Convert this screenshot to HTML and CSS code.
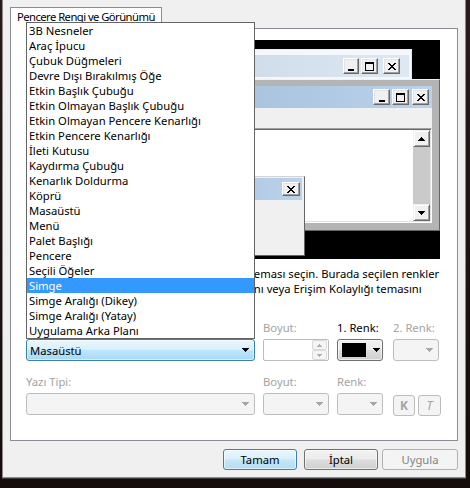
FILE: index.html
```html
<!DOCTYPE html>
<html lang="tr">
<head>
<meta charset="utf-8">
<title>Pencere Rengi ve Görünümü</title>
<link rel="stylesheet" href="styles.css">
</head>
<body>
<div class="frame">
<div class="dialog">
  <div class="tabs"><div class="tab">Pencere Rengi ve Görünümü</div></div>
  <div class="panel">
    <div class="preview">
      <div class="win inactive">
        <div class="caption">
          <span class="cap-fill"></span>
          <span class="cbtn b-min"><svg width="8" height="9" viewBox="0 0 8 9" shape-rendering="crispEdges"><rect x="1" y="7" width="6" height="2"/></svg></span>
          <span class="cbtn b-max"><svg width="9" height="9" viewBox="0 0 9 9" shape-rendering="crispEdges"><path fill-rule="evenodd" d="M0 0h9v9H0zM1 2h7v6H1z"/></svg></span>
          <span class="cbtn b-close"><svg width="8" height="7" viewBox="0 0 8 7" shape-rendering="crispEdges"><path d="M0 0h2v1H0zM6 0h2v1H6zM1 1h2v1H1zM5 1h2v1H5zM2 2h4v1H2zM3 3h2v1H3zM2 4h4v1H2zM1 5h2v1H1zM5 5h2v1H5zM0 6h2v1H0zM6 6h2v1H6z"/></svg></span>
        </div>
      </div>
      <div class="win active">
        <div class="caption">
          <span class="cap-fill"></span>
          <span class="cbtn b-min"><svg width="8" height="9" viewBox="0 0 8 9" shape-rendering="crispEdges"><rect x="1" y="7" width="6" height="2"/></svg></span>
          <span class="cbtn b-max"><svg width="9" height="9" viewBox="0 0 9 9" shape-rendering="crispEdges"><path fill-rule="evenodd" d="M0 0h9v9H0zM1 2h7v6H1z"/></svg></span>
          <span class="cbtn b-close"><svg width="8" height="7" viewBox="0 0 8 7" shape-rendering="crispEdges"><path d="M0 0h2v1H0zM6 0h2v1H6zM1 1h2v1H1zM5 1h2v1H5zM2 2h4v1H2zM3 3h2v1H3zM2 4h4v1H2zM1 5h2v1H1zM5 5h2v1H5zM0 6h2v1H0zM6 6h2v1H6z"/></svg></span>
        </div>
        <div class="menubar"></div>
        <div class="client">
          <div class="client-area"></div>
          <div class="vscroll">
            <span class="sbtn"><svg width="7" height="4" viewBox="0 0 7 4" shape-rendering="crispEdges"><path d="M3 0h1v1H3zM2 1h3v1H2zM1 2h5v1H1zM0 3h7v1H0z"/></svg></span>
            <span class="strack"></span>
            <span class="sbtn"><svg width="7" height="4" viewBox="0 0 7 4" shape-rendering="crispEdges"><path d="M0 0h7v1H0zM1 1h5v1H1zM2 2h3v1H2zM3 3h1v1H3z"/></svg></span>
          </div>
        </div>
      </div>
      <div class="win msgbox">
        <div class="caption">
          <span class="cap-fill"></span>
          <span class="cbtn b-close"><svg width="8" height="7" viewBox="0 0 8 7" shape-rendering="crispEdges"><path d="M0 0h2v1H0zM6 0h2v1H6zM1 1h2v1H1zM5 1h2v1H5zM2 2h4v1H2zM3 3h2v1H3zM2 4h4v1H2zM1 5h2v1H1zM5 5h2v1H5zM0 6h2v1H0zM6 6h2v1H6z"/></svg></span>
        </div>
        <div class="msgbody"></div>
      </div>
    </div>

    <p class="desc">Bir Windows 7 Temel veya Windows Klasik teması seçin. Burada seçilen renkler<br>ve boyutlar, yalnızca Windows Klasik temasını veya Erişim Kolaylığı temasını</p>

    <div class="row row1">
      <div class="field w-main">
        <span class="lbl">Öğe:</span>
        <div class="anchor">
          <div class="combo hot"><span class="cval">Masaüstü</span><span class="carr"><svg width="7" height="4" viewBox="0 0 7 4" shape-rendering="crispEdges"><path d="M0 0h7v1H0zM1 1h5v1H1zM2 2h3v1H2zM3 3h1v1H3z"/></svg></span></div>
          <ul class="droplist">
            <li>3B Nesneler</li>
            <li>Araç İpucu</li>
            <li>Çubuk Düğmeleri</li>
            <li>Devre Dışı Bırakılmış Öğe</li>
            <li>Etkin Başlık Çubuğu</li>
            <li>Etkin Olmayan Başlık Çubuğu</li>
            <li>Etkin Olmayan Pencere Kenarlığı</li>
            <li>Etkin Pencere Kenarlığı</li>
            <li>İleti Kutusu</li>
            <li>Kaydırma Çubuğu</li>
            <li>Kenarlık Doldurma</li>
            <li>Köprü</li>
            <li>Masaüstü</li>
            <li>Menü</li>
            <li>Palet Başlığı</li>
            <li>Pencere</li>
            <li>Seçili Öğeler</li>
            <li class="sel">Simge</li>
            <li>Simge Aralığı (Dikey)</li>
            <li>Simge Aralığı (Yatay)</li>
            <li>Uygulama Arka Planı</li>
          </ul>
        </div>
      </div>
      <div class="field w-size">
        <span class="lbl dis">Boyut:</span>
        <div class="spinbox">
          <span class="spin">
            <span class="sp"><svg width="5" height="3" viewBox="0 0 5 3" shape-rendering="crispEdges"><path d="M2 0h1v1H2zM1 1h3v1H1zM0 2h5v1H0z"/></svg></span>
            <span class="sp"><svg width="5" height="3" viewBox="0 0 5 3" shape-rendering="crispEdges"><path d="M0 0h5v1H0zM1 1h3v1H1zM2 2h1v1H2z"/></svg></span>
          </span>
        </div>
      </div>
      <div class="field w-color">
        <span class="lbl">1. Renk:</span>
        <div class="colorbtn"><span class="swatch"></span><svg class="carr-svg" width="7" height="4" viewBox="0 0 7 4" shape-rendering="crispEdges"><path d="M0 0h7v1H0zM1 1h5v1H1zM2 2h3v1H2zM3 3h1v1H3z"/></svg></div>
      </div>
      <div class="field w-last">
        <span class="lbl dis">2. Renk:</span>
        <div class="combo disabled narrow"><span class="cval"></span><span class="carr"><svg width="7" height="4" viewBox="0 0 7 4" shape-rendering="crispEdges"><path d="M0 0h7v1H0zM1 1h5v1H1zM2 2h3v1H2zM3 3h1v1H3z"/></svg></span></div>
      </div>
    </div>

    <div class="row row2">
      <div class="field w-main">
        <span class="lbl dis">Yazı Tipi:</span>
        <div class="combo disabled"><span class="cval"></span><span class="carr"><svg width="7" height="4" viewBox="0 0 7 4" shape-rendering="crispEdges"><path d="M0 0h7v1H0zM1 1h5v1H1zM2 2h3v1H2zM3 3h1v1H3z"/></svg></span></div>
      </div>
      <div class="field w-size">
        <span class="lbl dis">Boyut:</span>
        <div class="combo disabled"><span class="cval"></span><span class="carr"><svg width="7" height="4" viewBox="0 0 7 4" shape-rendering="crispEdges"><path d="M0 0h7v1H0zM1 1h5v1H1zM2 2h3v1H2zM3 3h1v1H3z"/></svg></span></div>
      </div>
      <div class="field w-color">
        <span class="lbl dis">Renk:</span>
        <div class="combo disabled"><span class="cval"></span><span class="carr"><svg width="7" height="4" viewBox="0 0 7 4" shape-rendering="crispEdges"><path d="M0 0h7v1H0zM1 1h5v1H1zM2 2h3v1H2zM3 3h1v1H3z"/></svg></span></div>
      </div>
      <div class="field w-last">
        <span class="lbl"></span>
        <div class="kt">
          <span class="fbtn fb-k">K</span>
          <span class="fbtn fb-t">T</span>
        </div>
      </div>
    </div>
  </div>

  <div class="buttons">
    <span class="btn def b-ok">Tamam</span>
    <span class="btn b-cancel">İptal</span>
    <span class="btn off b-apply">Uygula</span>
  </div>
</div>
</div>
</body>
</html>
```

FILE: styles.css
```css
* { box-sizing: border-box; }

html, body { margin: 0; padding: 0; }

body {
  width: 470px;
  height: 488px;
  overflow: hidden;
  background: #1d1212;
  font-family: "Segoe UI", "Noto Sans", sans-serif;
  font-size: 11.25px;
  line-height: 15px;
  color: #000;
}

.frame {
  width: 470px;
  height: 488px;
  padding-left: 2px;
  background: linear-gradient(#2b1a1a, #150c0c);
}

.dialog {
  width: 464px;
  height: 478px;
  background: #f0f0f0;
  border: 1px solid #8a8a8a;
  border-top: 0;
  box-shadow: 0 1px 0 #3c3c3c;
  padding: 7px 7px 0 7px;
  display: flex;
  flex-direction: column;
}

/* tab */
.tabs { display: flex; height: 21px; }
.tab {
  height: 22px;
  padding: 1px 6px 0;
  border: 1px solid #898c95;
  border-bottom: 0;
  background: #fff;
  position: relative;
  z-index: 1;
  white-space: nowrap;
  letter-spacing: -0.55px;
}

.panel {
  height: 413px;
  border: 1px solid #898c95;
  background: #fff;
  padding: 11px 0 0 15px;
}

/* preview canvas */
.preview {
  width: 414px;
  height: 219px;
  background: #000;
  position: relative;
  overflow: hidden;
}

.win {
  position: absolute;
  display: flex;
  flex-direction: column;
}

.caption {
  height: 22px;
  flex-shrink: 0;
  display: flex;
  align-items: center;
}
.cap-fill { flex: 1; }

.cbtn {
  width: 17px;
  height: 16px;
  flex-shrink: 0;
  background: #f0f0f0;
  border: 1px solid;
  border-color: #fff #696969 #696969 #fff;
  box-shadow: inset -1px -1px 0 #a0a0a0, inset 1px 1px 0 #e3e3e3;
  display: flex;
  align-items: center;
  justify-content: center;
}
.cbtn svg { fill: #000; display: block; }

.win.inactive {
  left: 8px;
  top: 9px;
  right: 28px;
  height: 110px;
  background: #f4f7fc;
  border: 1px solid #e8ebef;
  padding: 5px 2px 2px 4px;
}
.inactive .caption {
  background: linear-gradient(to right, #bfcddb, #dde8f3);
  padding-right: 9px;
}
.inactive .b-min { width: 16px; margin-right: 2px; }
.inactive .b-max { margin-right: 5px; }

.win.active {
  left: 14px;
  top: 39px;
  right: 0;
  height: 152px;
  background: #b4b4b4;
  border: 1px solid;
  border-color: #f0f0f0 #646464 #646464 #f0f0f0;
  padding: 6px 7px 7px 6px;
}
.active .caption {
  background: linear-gradient(to right, #99b4d1, #bad2ea);
  padding-right: 3px;
}
.active .b-min { margin-right: 2px; }
.active .b-max { margin-right: 3px; }

.menubar {
  height: 20px;
  flex-shrink: 0;
  background: #f0f0f0;
}

.client {
  height: 95px;
  flex-shrink: 0;
  background: #fff;
  border: 1px solid;
  border-color: #a0a0a0 #fff #fff #a0a0a0;
  box-shadow: inset 1px 1px 0 #696969, inset -1px -1px 0 #e3e3e3;
  padding: 1px;
  display: flex;
}
.client-area { flex: 1; }

.vscroll {
  width: 17px;
  display: flex;
  flex-direction: column;
  background: #cacaca;
}
.strack { flex: 1; }
.sbtn {
  height: 17px;
  background: #f0f0f0;
  border: 1px solid;
  border-color: #f0f0f0 #696969 #696969 #f0f0f0;
  box-shadow: inset 1px 1px 0 #fff, inset -1px -1px 0 #a0a0a0;
  display: flex;
  align-items: center;
  justify-content: center;
}
.sbtn svg { fill: #000; display: block; }

.win.msgbox {
  left: 40px;
  top: 136px;
  right: 135px;
  height: 80px;
  background: #f0f0f0;
  border: 1px solid;
  border-color: #d4d4d4 #646464 #646464 #d4d4d4;
  padding: 1px 2px 2px 1px;
}
.msgbox .caption {
  background: linear-gradient(to right, #99b4d1, #bad2ea);
  padding-right: 2px;
}
.msgbox .b-close { width: 18px; height: 14px; }
.msgbody { flex: 1; }

/* description */
.desc {
  margin: 7px 0 0;
  white-space: nowrap;
  line-height: 15px;
}

/* field rows */
.row { display: flex; gap: 8px; }
.row1 { margin-top: 24px; }
.row2 { margin-top: 13px; }

.field { display: flex; flex-direction: column; }
.lbl {
  display: block;
  height: 15px;
  margin-bottom: 4px;
  white-space: nowrap;
}
.dis { color: #a3a3a3; }

.w-main { width: 229px; }
.w-size { width: 66px; }
.w-color { width: 46px; }
.w-last { width: 48px; margin-left: 2px; }

.anchor { position: relative; }

.combo {
  height: 22px;
  border-radius: 3px;
  display: flex;
  align-items: center;
  padding-left: 3px;
}
.combo .cval { flex: 1; white-space: nowrap; }
.carr {
  width: 17px;
  display: flex;
  justify-content: center;
  align-items: center;
}
.carr svg { display: block; }

.combo.hot {
  border: 1px solid #3c7fb1;
  background: linear-gradient(#eaf6fd 0%, #d9f0fc 48%, #bee6fd 52%, #a7d9f5 100%);
  box-shadow: inset 0 0 0 1px rgba(255, 255, 255, 0.55);
}
.combo.hot .carr svg { fill: #000; }

.combo.disabled {
  border: 1px solid #bdbdbd;
  background: #f4f4f4;
}
.combo.disabled .carr svg { fill: #a6a6a6; }
.combo.narrow { width: 46px; }

.droplist {
  position: absolute;
  left: 0;
  bottom: 100%;
  width: 229px;
  margin: 0;
  padding: 0;
  list-style: none;
  background: #fff;
  border: 1px solid #646464;
  z-index: 10;
}
.droplist li {
  height: 15px;
  line-height: 15px;
  padding-left: 2px;
  white-space: nowrap;
}
.droplist li.sel { background: #3399ff; color: #fff; }

.spinbox {
  height: 22px;
  border: 1px solid #bdbdbd;
  border-radius: 2px;
  background: #fff;
  display: flex;
  justify-content: flex-end;
  padding-right: 1px;
}
.spin {
  width: 15px;
  display: flex;
  flex-direction: column;
}
.sp {
  flex: 1;
  border: 1px solid #d9d9d9;
  border-radius: 2px;
  background: #f5f5f5;
  display: flex;
  align-items: center;
  justify-content: center;
}
.sp svg { fill: #b0b0b0; display: block; }

.colorbtn {
  height: 22px;
  border: 1px solid #707070;
  border-radius: 3px;
  background: linear-gradient(#f2f2f2 0%, #ebebeb 48%, #dddddd 52%, #cfcfcf 100%);
  box-shadow: inset 0 0 0 1px rgba(255, 255, 255, 0.6);
  display: flex;
  align-items: center;
  padding-left: 4px;
}
.swatch {
  width: 24px;
  height: 14px;
  background: #000;
}
.carr-svg { fill: #000; margin-left: 7px; display: block; }

.kt { display: flex; gap: 3px; margin-top: 2px; }
.fbtn {
  height: 21px;
  border: 1px solid #bdbdbd;
  border-radius: 3px;
  background: #f4f4f4;
  color: #a3a3a3;
  display: flex;
  align-items: center;
  justify-content: center;
  font-size: 12px;
}
.fb-k { width: 22px; font-weight: bold; }
.fb-t { width: 23px; font-style: italic; }

/* dialog buttons */
.buttons {
  display: flex;
  justify-content: flex-end;
  margin-top: 8px;
}
.btn {
  height: 21px;
  border: 1px solid #707070;
  border-radius: 3px;
  background: linear-gradient(#f2f2f2 0%, #ebebeb 48%, #dddddd 52%, #cfcfcf 100%);
  box-shadow: inset 0 0 0 1px rgba(255, 255, 255, 0.6);
  display: flex;
  align-items: center;
  justify-content: center;
}
.btn.def {
  border-color: #3c7fb1;
  background: linear-gradient(#eaf6fd 0%, #d9f0fc 48%, #c4e6f8 52%, #b2dcf3 100%);
}
.btn.off {
  border-color: #adb2b5;
  background: #f4f4f4;
  color: #838383;
  box-shadow: none;
}
.b-ok { width: 74px; margin-right: 7px; }
.b-cancel { width: 74px; margin-right: 4px; }
.b-apply { width: 76px; }
```
